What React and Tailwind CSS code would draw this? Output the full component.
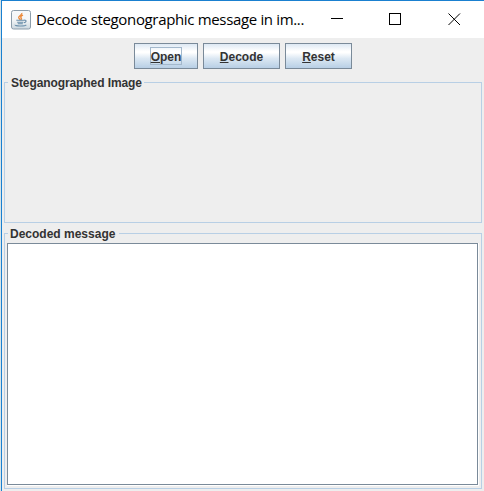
const METAL_BUTTON =
  "flex h-[26px] items-center justify-center border border-[#7a8a99] bg-[linear-gradient(180deg,#dde8f3_0%,#ffffff_30%,#ffffff_36%,#dce8f3_60%,#b8cfe5_100%)]";

function MetalButton({ label, width, focused }) {
  return (
    <button className={`${METAL_BUTTON} ${width}`}>
      <span
        className={`flex h-[18px] items-center whitespace-nowrap border pt-px ${
          focused ? "border-[#a3b8cc]" : "border-transparent"
        }`}
      >
        <span>
          <span className="underline decoration-1 underline-offset-1">{label[0]}</span>
          {label.slice(1)}
        </span>
      </span>
    </button>
  );
}

function TitledPanel({ title, titleClass, className, children }) {
  return (
    <section className={`relative border border-[#b8cfe5] ${className}`}>
      <h2 className={`absolute -top-[8px] h-[15px] whitespace-nowrap bg-[#eeeeee] leading-[16px] ${titleClass}`}>
        {title}
      </h2>
      {children}
    </section>
  );
}

function JavaIcon() {
  return (
    <svg width="20" height="20" viewBox="0 0 20 20" fill="none">
      <defs>
        <linearGradient id="tile" x1="0" y1="0" x2="0" y2="1">
          <stop offset="0" stopColor="#f7f9fa" />
          <stop offset="0.5" stopColor="#f4f6f7" />
          <stop offset="1" stopColor="#cbd7df" />
        </linearGradient>
      </defs>
      <rect x="0.5" y="0.5" width="19" height="18.5" rx="2" fill="url(#tile)" stroke="#8c9daa" />
      <path d="M10.8 3C11.4 5 7.3 5.8 7.7 7.7C7.9 8.5 9 9.1 9.2 9.8M12 5.2C9.7 6.2 9.3 7 10.2 8C10.7 8.6 10.4 9.3 10 9.8" stroke="#ec8b3c" strokeWidth="1.4" />
      <path d="M5.3 10.3H13.2M6.2 12.2H12.4M6.8 13.8H11.8M13.2 10.2C16 9.8 15.5 12.2 13 12.8" stroke="#668aa7" strokeWidth="1.1" />
      <path d="M4.3 14.8C3 16.2 14 16.6 15.3 14.9" stroke="#6b8fab" strokeWidth="1.1" />
    </svg>
  );
}

export default function App() {
  return (
    <div className="flex h-[491px] w-[484px] overflow-hidden bg-[#eeeeee] text-[12px] font-bold text-[#333333] [font-family:'Liberation_Sans',Arial,sans-serif]">
      <div className="w-px shrink-0 bg-[#d5e3e8]" />
      <div className="flex min-w-0 flex-1 flex-col border-l border-t border-[#1a80d0]">
        <header className="flex h-[37px] shrink-0 items-center bg-white text-black">
          <div className="ml-[9px] h-5 w-5">
            <JavaIcon />
          </div>
          <h1 className="ml-[5px] w-[272px] whitespace-nowrap text-[15px] font-normal tracking-[-0.34px] [font-family:'Open_Sans','Noto_Sans',sans-serif]">
            Decode stegonographic message in im...
          </h1>
          <svg className="ml-[23px]" width="130" height="13" viewBox="0 0 130 13" fill="none" stroke="#000">
            <path d="M0 5.5H12" shapeRendering="crispEdges" />
            <rect x="58.5" y="0.5" width="11" height="11" shapeRendering="crispEdges" />
            <path d="M117.5 0.5L129 12M129 0.5L117.5 12" />
          </svg>
        </header>
        <div className="ml-[132px] mt-[5px] flex shrink-0 gap-[5px]">
          <MetalButton label="Open" width="w-[64px]" focused />
          <MetalButton label="Decode" width="w-[77px]" />
          <MetalButton label="Reset" width="w-[67px]" />
        </div>
        <TitledPanel
          title="Steganographed Image"
          titleClass="left-[3px] w-[136px] pl-[3px] tracking-[-0.09px]"
          className="ml-[2px] mt-[13px] h-[141px] w-[478px] shrink-0"
        />
        <TitledPanel
          title="Decoded message"
          titleClass="left-[3px] w-[111px] pl-[2px]"
          className="ml-[2px] mt-[10px] h-[256px] w-[478px] shrink-0 pl-[2px] pt-[9px]"
        >
          <div className="h-[243px] w-[472px] border-b border-r border-white">
            <textarea readOnly className="block h-[242px] w-[471px] resize-none border border-[#7a8a99] bg-white outline-none" />
          </div>
        </TitledPanel>
      </div>
    </div>
  );
}
